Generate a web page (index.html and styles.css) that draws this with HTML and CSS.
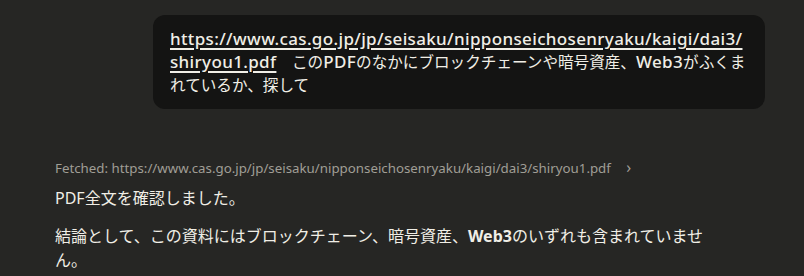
FILE: index.html
```html
<!DOCTYPE html>
<html lang="ja">
<head>
<meta charset="utf-8">
<link rel="stylesheet" href="styles.css">
</head>
<body>
<main class="chat">
  <div class="user-row">
    <div class="bubble">
      <a class="link lat" href="#">https://www.cas.go.jp/jp/seisaku/nipponseichosenryaku/kaigi/dai3/<wbr>shiryou1.pdf</a>　この<span class="lat">PDF</span>のなかにブロックチェーンや暗号資産、<span class="lat">Web3</span>がふくまれているか、探して
    </div>
  </div>
  <div class="assistant">
    <div class="fetched">Fetched: https://www.cas.go.jp/jp/seisaku/nipponseichosenryaku/kaigi/dai3/shiryou1.pdf <span class="chev">›</span></div>
    <p class="para">PDF全文を確認しました。</p>
    <p class="para">結論として、この資料にはブロックチェーン、暗号資産、<strong>Web3</strong>のいずれも含まれていません。</p>
  </div>
</main>
</body>
</html>
```
FILE: styles.css
```css
html, body {
  margin: 0;
  background: #262624;
}
body {
  font-family: "Noto Sans", "Noto Sans CJK JP", sans-serif;
  color: #f0eee6;
  font-size: 16px;
}
.chat {
  padding: 15px 39px 0 55px;
  display: flex;
  flex-direction: column;
}
.user-row {
  display: flex;
  justify-content: flex-end;
}
.bubble {
  box-sizing: border-box;
  width: 612px;
  background: #141413;
  border-radius: 12px;
  padding: 12px 17px 13px 17px;
  font-family: "Noto Sans CJK JP", sans-serif;
  font-size: 15.6px;
  line-height: 23px;
  overflow-wrap: break-word;
}
.lat {
  font-family: "Noto Sans", sans-serif;
  font-size: 17px;
  letter-spacing: 0.35px;
  font-weight: 500;
}
.link {
  color: #f0eee6;
  text-decoration: underline;
  text-decoration-thickness: 1.5px;
  text-underline-offset: 3px;
}
.assistant {
  margin-top: 48px;
  width: 660px;
}
.fetched {
  font-size: 13.3px;
  color: #a09e96;
  line-height: 20px;
}
.chev {
  margin-left: 12px;
  font-size: 16px;
}
.para {
  margin: 8px 0 0 0;
  line-height: 24px;
}
.para + .para {
  margin-top: 14px;
}
strong {
  font-weight: 700;
}
```
